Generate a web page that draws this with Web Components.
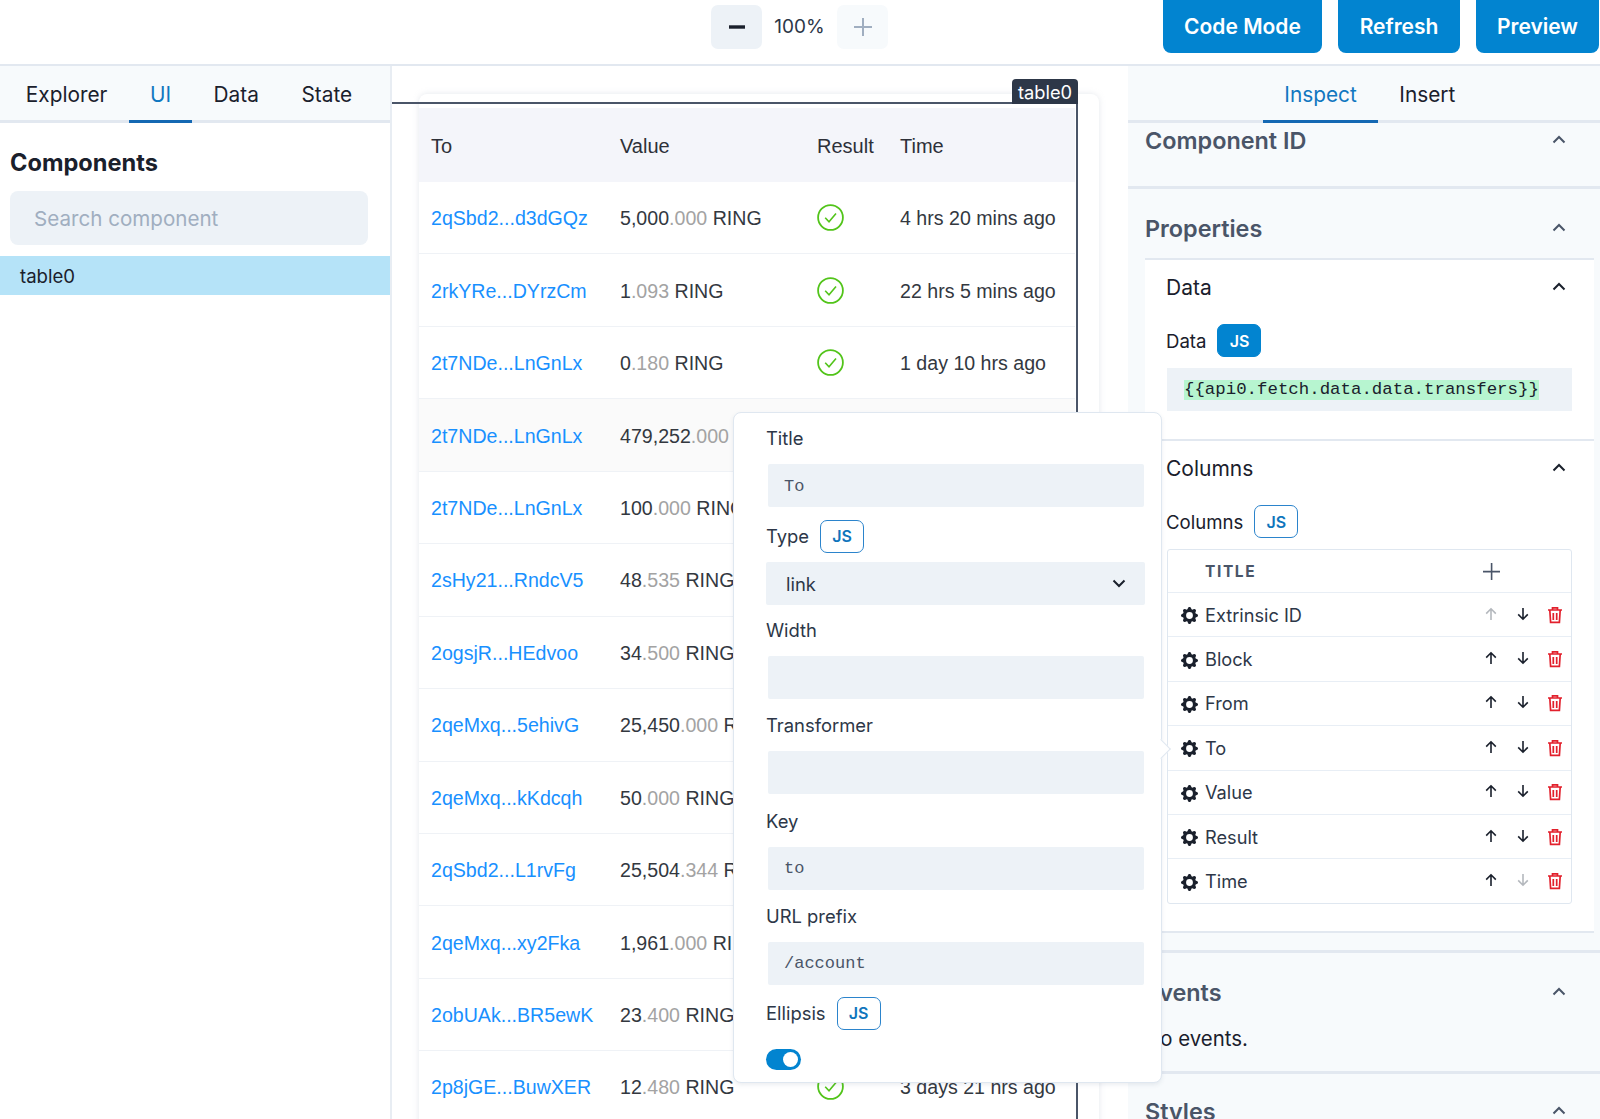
<!DOCTYPE html>
<html lang="en">
<head>
<meta charset="utf-8">
<title>Builder</title>
<style>
  html, body { margin: 0; height: 1119px; overflow: hidden; background: #fff; }
  body { font-family: Inter, "Liberation Sans", sans-serif; color: #1a202c; }
</style>
</head>
<body>
<builder-app></builder-app>
<script>
const icons = {
  up: `<svg width="16" height="16" viewBox="0 0 16 16" fill="none" stroke="currentColor" stroke-width="1.6"><path d="M8 14V3M3.2 7.6 8 2.8l4.8 4.8"/></svg>`,
  down: `<svg width="16" height="16" viewBox="0 0 16 16" fill="none" stroke="currentColor" stroke-width="1.6"><path d="M8 2v11M3.2 8.4 8 13.2l4.8-4.8"/></svg>`,
  trash: `<svg width="16" height="18" viewBox="0 0 16 18" fill="none" stroke="#e2202c" stroke-width="1.7"><path d="M1 4h14M5.5 4V1.8h5V4M2.8 4l.8 12.4h8.8L13.2 4M6.3 7v7M9.7 7v7"/></svg>`,
  gear: `<svg width="17" height="17" viewBox="2 2 16 16" fill="#1a202c"><path fill-rule="evenodd" d="M11.49 3.17c-.38-1.56-2.6-1.56-2.98 0a1.532 1.532 0 01-2.286.948c-1.372-.836-2.942.734-2.106 2.106.54.886.061 2.042-.947 2.287-1.561.379-1.561 2.6 0 2.978a1.532 1.532 0 01.947 2.287c-.836 1.372.734 2.942 2.106 2.106a1.532 1.532 0 012.287.947c.379 1.561 2.6 1.561 2.978 0a1.533 1.533 0 012.287-.947c1.372.836 2.942-.734 2.106-2.106a1.533 1.533 0 01.947-2.287c1.561-.379 1.561-2.6 0-2.978a1.532 1.532 0 01-.947-2.287c.836-1.372-.734-2.942-2.106-2.106a1.532 1.532 0 01-2.287-.947zM10 13.2a3.2 3.2 0 100-6.4 3.2 3.2 0 000 6.4z"/></svg>`,
  check: `<svg width="27" height="27" viewBox="0 0 27 27" fill="none" stroke="#52c41a" stroke-width="1.8"><circle cx="13.5" cy="13.5" r="12.4"/><path d="M8.2 13.8l3.8 4 7-8.2" stroke-width="1.6"/></svg>`,
  chevUp: `<svg width="14" height="9" viewBox="0 0 14 9" fill="none" stroke="currentColor" stroke-width="2"><path d="M1.5 7.5 7 2l5.5 5.5"/></svg>`,
  chevDown: `<svg width="14" height="9" viewBox="0 0 14 9" fill="none" stroke="#1a202c" stroke-width="2"><path d="M1.5 1.5 7 7l5.5-5.5"/></svg>`
};

// Small blue "JS" toggle, outlined unless "solid" is set
customElements.define('js-button', class extends HTMLElement {
  constructor() {
    super();
    this.attachShadow({mode: 'open'}).innerHTML = `
      <style>
        :host { display: inline-flex; align-items: center; justify-content: center; box-sizing: border-box;
          width: 44px; height: 33px; border: 1.5px solid #2b84cc; border-radius: 7px; background: #fff;
          color: #0f75bc; font: 600 16px Inter, sans-serif; }
        :host([solid]) { background: #0284d0; color: #fff; border-color: #0284d0; }
      </style>JS`;
  }
});

customElements.define('tab-bar', class extends HTMLElement {
  constructor() {
    super();
    const items = (this.getAttribute('items') || '').split(',');
    const active = this.getAttribute('active');
    this.attachShadow({mode: 'open'}).innerHTML = `
      <style>
        :host { display: flex; box-sizing: border-box; height: 57px; background: #f7fafc;
          border-bottom: 3px solid #e2e8f0; padding-left: var(--tabs-start, 4.5px); }
        div { height: 57px; box-sizing: border-box; padding: 2px 21.3px 3px; display: flex; align-items: center;
          font-size: 20.8px; color: #1a202c; }
        div.on { color: #1077c0; border-bottom: 3px solid #1468b3; padding-bottom: 0; }
      </style>
      ${items.map((t) => `<div class="${t === active ? 'on' : ''}">${t}</div>`).join('')}`;
  }
});

customElements.define('top-bar', class extends HTMLElement {
  constructor() {
    super();
    this.attachShadow({mode: 'open'}).innerHTML = `
      <style>
        :host { display: flex; height: 64px; border-bottom: 2px solid #e2e8f0; background: #fff; padding-right: 1px; }
        .zoom { display: flex; align-items: center; margin-left: 711px; height: 53px; }
        .zoom b { width: 51px; height: 44px; border-radius: 7px; background: #edf2f7; display: flex;
          align-items: center; justify-content: center; }
        .zoom b.off { background: #f7fafc; }
        .zoom span { width: 75px; text-align: center; font-size: 19px; color: #2d3748; }
        .btns { margin-left: auto; display: flex; gap: 16px; }
        .btns div { height: 53px; box-sizing: border-box; border-radius: 0 0 8px 8px; background: #0284d0; color: #fff;
          font-weight: 600; font-size: 21px; display: flex; align-items: center; justify-content: center; }
      </style>
      <div class="zoom">
        <b><svg width="16" height="4"><rect width="16" height="3.4" y=".3" fill="#1a202c"/></svg></b>
        <span>100%</span>
        <b class="off"><svg width="18" height="18" fill="#a0aec0"><path d="M8 0h2v8h8v2h-8v8H8v-8H0V8h8z"/></svg></b>
      </div>
      <div class="btns">
        <div style="width:159px">Code Mode</div>
        <div style="width:122px">Refresh</div>
        <div style="width:123px">Preview</div>
      </div>`;
  }
});

customElements.define('left-panel', class extends HTMLElement {
  constructor() {
    super();
    this.attachShadow({mode: 'open'}).innerHTML = `
      <style>
        :host { display: block; box-sizing: border-box; width: 392px; height: 100%; border-right: 2px solid #e8edf3; background: #fff; }
        h2 { margin: 0; padding: 25px 10px 0; font-size: 23.6px; line-height: 30px; font-weight: 700; color: #1a202c; }
        .search { margin: 13px 22px 0 10px; height: 54px; border-radius: 8px; background: #edf2f7; color: #a0aec0;
          font-size: 20.6px; display: flex; align-items: center; padding-left: 24px; }
        .item { margin-top: 11px; height: 39px; background: #b5e3f8; display: flex; align-items: center;
          padding-left: 20px; font-size: 18.6px; color: #1a202c; }
      </style>
      <tab-bar items="Explorer,UI,Data,State" active="UI"></tab-bar>
      <h2>Components</h2>
      <div class="search">Search component</div>
      <div class="item">table0</div>`;
  }
});

customElements.define('transfer-row', class extends HTMLElement {
  constructor() {
    super();
    const [whole, frac] = this.getAttribute('value').split('.');
    const time = this.getAttribute('time');
    this.attachShadow({mode: 'open'}).innerHTML = `
      <style>
        :host { display: grid; grid-template-columns: 189px 197px 83px 1fr; align-items: center; box-sizing: border-box;
          height: 72.45px; padding: 2px 0 0 12px; border-bottom: 1px solid #eff2f6; background: #fff;
          font: 19.6px "Liberation Sans", Arial, sans-serif; color: #33383f; white-space: nowrap; }
        :host([hover]) { background: #fafafa; }
        a { color: #1890ff; }
        i { font-style: normal; color: #a3a3a3; }
        svg { display: block; margin-top: -2px; }
      </style>
      <a>${this.getAttribute('to')}</a>
      <span>${whole}<i>.${frac}</i> RING</span>
      <span>${time ? icons.check : ''}</span>
      <span>${time || ''}</span>`;
  }
});

customElements.define('canvas-table', class extends HTMLElement {
  constructor() {
    super();
    this.attachShadow({mode: 'open'}).innerHTML = `
      <style>
        :host { display: block; position: relative; flex: 1; min-width: 0; height: 100%; background: #fff; overflow: hidden; }
        .card { margin: 28px 29px 0 27px; padding: 14px 24px 0 0; background: #fff; border-radius: 8px 8px 0 0;
          box-shadow: 0 0 6px rgba(160,174,192,.28); height: 1100px; }
        .head { display: grid; grid-template-columns: 189px 197px 83px 1fr; align-items: center; box-sizing: border-box; height: 74px;
          padding: 2px 0 0 12px; background: #f4f5fa; font: 20px "Liberation Sans", Arial, sans-serif; color: #2d3038; }
        .frame { position: absolute; left: -2px; top: 36px; width: 686px; height: 1100px; box-sizing: content-box;
          border-top: 2px solid #4a5568; border-right: 2px solid #4a5568; pointer-events: none; }
        .tag { position: absolute; right: -2px; top: -25px; width: 66px; height: 25px; border-radius: 4px 4px 0 0;
          background: #2d3748; color: #fff; font-size: 18.3px; display: flex; align-items: center; justify-content: center; }
      </style>
      <div class="card">
        <div class="head"><span>To</span><span>Value</span><span>Result</span><span>Time</span></div>
        <slot></slot>
      </div>
      <div class="frame"><div class="tag">table0</div></div>`;
  }
});

customElements.define('column-row', class extends HTMLElement {
  constructor() {
    super();
    const t = this.getAttribute('title');
    const first = this.hasAttribute('first');
    const last = this.hasAttribute('last');
    this.attachShadow({mode: 'open'}).innerHTML = `
      <style>
        :host { display: flex; align-items: center; box-sizing: border-box; height: 44.4px; border-top: 1px solid #e8eef5;
          font-size: 18.2px; color: #2d3748; position: relative; }
        .g { width: 17px; height: 17px; margin: 0 7px 0 13px; display: block; }
        .t { flex: 1; }
        .a { width: 32px; height: 18px; display: flex; justify-content: center; color: #1a202c; }
        .a.dis { color: #b4b8bd; }
      </style>
      <span class="g">${icons.gear}</span>
      <span class="t">${t}</span>
      <span class="a ${first ? 'dis' : ''}">${icons.up}</span>
      <span class="a ${last ? 'dis' : ''}">${icons.down}</span>
      <span class="a">${icons.trash}</span>`;
  }
});

customElements.define('inspector-section', class extends HTMLElement {
  constructor() {
    super();
    this.attachShadow({mode: 'open'}).innerHTML = `
      <style>
        :host { display: block; box-sizing: border-box; border-bottom: 3px solid #e2e8f0; padding-left: 17px; }
        .h { display: flex; align-items: center; justify-content: space-between; height: calc(var(--head, 36px) - 2px);
          padding: var(--head-top, 0) var(--head-end, 34px) 2px 0; font-size: 23.4px; font-weight: 600; color: #4a5568; }
        svg { margin-bottom: 1px; }
      </style>
      <div class="h"><span>${this.getAttribute('heading')}</span>${icons.chevUp}</div>
      <slot></slot>`;
  }
});

customElements.define('sub-panel', class extends HTMLElement {
  constructor() {
    super();
    this.attachShadow({mode: 'open'}).innerHTML = `
      <style>
        :host { display: block; box-sizing: border-box; padding: 0 21px 0 21px; border-top: 2px solid #e2e8f0; }
        .h { display: flex; align-items: center; justify-content: space-between; height: 54px; padding-right: 7px;
          font-size: 21px; color: #1a202c; }
        svg { margin-bottom: 2px; }
      </style>
      <div class="h"><span>${this.getAttribute('heading')}</span>${icons.chevUp}</div>
      <slot></slot>`;
  }
});

customElements.define('inspector-panel', class extends HTMLElement {
  constructor() {
    super();
    this.attachShadow({mode: 'open'}).innerHTML = `
      <style>
        :host { display: block; box-sizing: border-box; width: 474px; height: 100%; border-left: 2px solid #a9bacb;
          background: #f7fafc; --tabs-start: 135px; margin-left: -2px; overflow: hidden; }
        .white { background: #fff; border-bottom: 2px solid #e2e8f0; }
        .lbl { display: flex; align-items: center; gap: 11px; height: 33px; font-size: 18.6px; color: #1a202c; }
        .code { margin: 11px 1px 0 1px; height: 43px; background: #edf2f7; display: flex; align-items: center; padding-left: 17px; }
        code { font: 17.4px/20px "Liberation Mono", monospace; color: #1a202c; background: #b7f5d0; }
        .cols { margin: 11px 1px 27.6px 1px; border: 1.5px solid #dfe7f0; border-radius: 3px; }
        .cols-h { display: flex; align-items: center; height: 42px; position: relative; padding-left: 37px;
          font-size: 15.5px; font-weight: 700; letter-spacing: 1.6px; color: #4a5568; }
        .plus { position: absolute; left: 315px; top: 13px; }
        .p { margin: 0; padding: 5px 0 0; font-size: 20.4px; line-height: 24px; color: #1a202c; }
      </style>
      <tab-bar items="Inspect,Insert" active="Inspect"></tab-bar>
      <inspector-section heading="Component ID" style="height:66px"></inspector-section>
      <inspector-section heading="Properties" style="--head:58px;--head-top:11px;--head-end:28px;padding-right:6px;height:764px">
        <div class="white">
          <sub-panel heading="Data" style="padding-bottom:28px;">
            <div class="lbl" style="margin-top:10px">Data <js-button solid></js-button></div>
            <div class="code"><code>{{api0.fetch.data.data.transfers}}</code></div>
          </sub-panel>
          <sub-panel heading="Columns">
            <div class="lbl" style="margin-top:10px">Columns <js-button></js-button></div>
            <div class="cols">
              <div class="cols-h">TITLE<svg class="plus" width="17" height="17" fill="#4a5568"><path d="M7.8 0h1.6v7.8h7.6v1.6H9.4V17H7.8V9.4H0V7.8h7.8z"/></svg></div>
              <column-row title="Extrinsic ID" first></column-row>
              <column-row title="Block"></column-row>
              <column-row title="From"></column-row>
              <column-row title="To"></column-row>
              <column-row title="Value"></column-row>
              <column-row title="Result"></column-row>
              <column-row title="Time" last></column-row>
            </div>
          </sub-panel>
        </div>
      </inspector-section>
      <inspector-section heading="Events" style="--head:58px;--head-top:11px;height:121px;">
        <p class="p">No events.</p>
      </inspector-section>
      <inspector-section heading="Styles" style="--head:58px;--head-top:9px;border:0"></inspector-section>`;
  }
});

customElements.define('form-field', class extends HTMLElement {
  constructor() {
    super();
    const js = this.hasAttribute('js');
    const mono = this.getAttribute('mono');
    const select = this.getAttribute('select');
    let control = '';
    if (select) {
      control = `<div class="in sel">${select}${icons.chevDown}</div>`;
    } else if (mono !== null) {
      control = `<div class="in">${mono}</div>`;
    }
    this.attachShadow({mode: 'open'}).innerHTML = `
      <style>
        :host { display: block; }
        .l { display: flex; align-items: center; gap: 11px; height: 32px; font-size: 18.4px; color: #2d3748; }
        .in { margin: 10px 0 0 2px; width: 376px; height: 43px; box-sizing: border-box; border-radius: 2px; background: #edf2f7;
          display: flex; align-items: center; padding: 1px 0 0 16px; font: 17px "Liberation Mono", monospace; color: #4a5568; }
        .sel { margin-left: 0; width: 379px; padding: 0 19px 0 20px; justify-content: space-between;
          font: 18.4px Inter, sans-serif; color: #2d3748; }
      </style>
      <div class="l">${this.getAttribute('label')}${js ? '<js-button></js-button>' : ''}</div>
      ${control}`;
  }
});

customElements.define('column-popup', class extends HTMLElement {
  constructor() {
    super();
    this.attachShadow({mode: 'open'}).innerHTML = `
      <style>
        :host { position: absolute; left: 733px; top: 412px; width: 429px; height: 671px; box-sizing: border-box;
          padding: 9px 0 0 32px; background: #fff; border: 1px solid #dfe7f0; border-radius: 8px;
          box-shadow: 0 2px 4px rgba(100,116,139,.12); display: flex; flex-direction: column; gap: 10.4px; }
        .arrow { position: absolute; right: -7px; top: 329px; width: 13px; height: 13px; background: #fff;
          border: 1px solid #dfe7f0; border-left: 0; border-bottom: 0; transform: rotate(45deg); }
        .sw { width: 35px; height: 21px; border-radius: 11px; background: #0284d0; position: relative; margin-top: 9px; }
        .sw::after { content: ""; position: absolute; right: 3px; top: 3px; width: 15px; height: 15px; border-radius: 50%; background: #fff; }
      </style>
      <form-field label="Title" mono="To" style="margin-bottom:1px"></form-field>
      <form-field label="Type" js select="link" style="margin:2px 0 -2px"></form-field>
      <form-field label="Width" mono=""></form-field>
      <form-field label="Transformer" mono=""></form-field>
      <form-field label="Key" mono="to"></form-field>
      <form-field label="URL prefix" mono="/account"></form-field>
      <form-field label="Ellipsis" js style="margin-top:2px"></form-field>
      <div class="sw"></div>
      <div class="arrow"></div>`;
  }
});

customElements.define('builder-app', class extends HTMLElement {
  constructor() {
    super();
    this.attachShadow({mode: 'open'}).innerHTML = `
      <style>
        :host { display: block; position: relative; width: 1600px; height: 1119px; overflow: hidden; }
        .main { display: flex; height: 1053px; }
      </style>
      <top-bar></top-bar>
      <div class="main">
        <left-panel></left-panel>
        <canvas-table>
          <transfer-row to="2qSbd2...d3dGQz" value="5,000.000" time="4 hrs 20 mins ago"></transfer-row>
          <transfer-row to="2rkYRe...DYrzCm" value="1.093" time="22 hrs 5 mins ago"></transfer-row>
          <transfer-row to="2t7NDe...LnGnLx" value="0.180" time="1 day 10 hrs ago"></transfer-row>
          <transfer-row to="2t7NDe...LnGnLx" value="479,252.000" hover></transfer-row>
          <transfer-row to="2t7NDe...LnGnLx" value="100.000"></transfer-row>
          <transfer-row to="2sHy21...RndcV5" value="48.535"></transfer-row>
          <transfer-row to="2ogsjR...HEdvoo" value="34.500"></transfer-row>
          <transfer-row to="2qeMxq...5ehivG" value="25,450.000"></transfer-row>
          <transfer-row to="2qeMxq...kKdcqh" value="50.000"></transfer-row>
          <transfer-row to="2qSbd2...L1rvFg" value="25,504.344"></transfer-row>
          <transfer-row to="2qeMxq...xy2Fka" value="1,961.000"></transfer-row>
          <transfer-row to="2obUAk...BR5ewK" value="23.400"></transfer-row>
          <transfer-row to="2p8jGE...BuwXER" value="12.480" time="3 days 21 hrs ago"></transfer-row>
        </canvas-table>
        <inspector-panel></inspector-panel>
      </div>
      <column-popup></column-popup>`;
  }
});
</script>
</body>
</html>
